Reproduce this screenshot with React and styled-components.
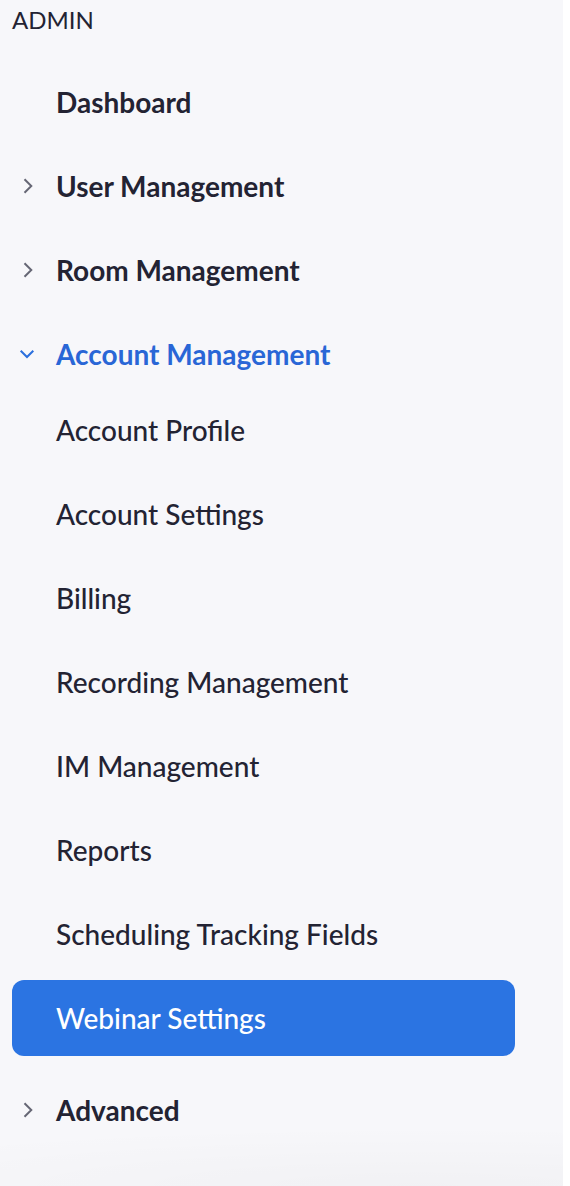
import React from "react";
import styled, { createGlobalStyle } from "styled-components";

const GlobalStyle = createGlobalStyle`
  html, body {
    margin: 0;
    padding: 0;
    background: #ffffff;
  }
  body {
    font-family: Lato, "Open Sans", "Liberation Sans", sans-serif;
    -webkit-font-smoothing: antialiased;
  }
`;

const menu = [
  { label: "Dashboard" },
  { label: "User Management", caret: "right" },
  { label: "Room Management", caret: "right" },
  {
    label: "Account Management",
    caret: "down",
    open: true,
    children: [
      "Account Profile",
      "Account Settings",
      "Billing",
      "Recording Management",
      "IM Management",
      "Reports",
      "Scheduling Tracking Fields",
      "Webinar Settings",
    ],
  },
  { label: "Advanced", caret: "right" },
];

const Caret = ({ dir }) =>
  dir === "down" ? (
    <svg width="16" height="10" viewBox="0 0 16 10">
      <path
        d="M1.7 1.7 L8 8 L14.3 1.7"
        fill="none"
        stroke="currentColor"
        strokeWidth="2"
      />
    </svg>
  ) : (
    <svg width="10" height="16" viewBox="0 0 10 16">
      <path
        d="M1.5 1.2 L8.3 8 L1.5 14.8"
        fill="none"
        stroke="currentColor"
        strokeWidth="2"
      />
    </svg>
  );

export default function App() {
  const active = "Webinar Settings";

  return (
    <>
      <GlobalStyle />
      <Sidebar>
        <Heading>ADMIN</Heading>
        <Nav>
          {menu.map((item) => (
            <React.Fragment key={item.label}>
              <TopItem $open={item.open}>
                <CaretSlot $open={item.open} $dir={item.caret}>
                  {item.caret && <Caret dir={item.caret} />}
                </CaretSlot>
                {item.label}
              </TopItem>
              {item.children && (
                <SubList>
                  {item.children.map((child) => (
                    <SubItem key={child} $active={child === active}>
                      {child}
                    </SubItem>
                  ))}
                </SubList>
              )}
            </React.Fragment>
          ))}
        </Nav>
      </Sidebar>
    </>
  );
}

const Sidebar = styled.aside`
  width: 563px;
  min-height: 100vh;
  box-sizing: border-box;
  background: radial-gradient(
      ellipse 120% 60px at 75% 100%,
      rgba(0, 0, 0, 0.025),
      rgba(0, 0, 0, 0) 100%
    ),
    #f7f7fa;
`;

const Heading = styled.div`
  height: 40px;
  line-height: 40px;
  padding-left: 12px;
  font-size: 24px;
  font-weight: 400;
  color: #232333;
`;

const Nav = styled.nav`
  display: flex;
  flex-direction: column;
  padding-top: 20px;
`;

const TopItem = styled.div`
  display: flex;
  align-items: center;
  height: 84px;
  margin-left: 12px;
  font-size: 28px;
  font-weight: 700;
  color: ${(p) => (p.$open ? "#2966d6" : "#232333")};
`;

const CaretSlot = styled.span`
  display: flex;
  align-items: center;
  width: 44px;
  padding-left: ${(p) => (p.$dir === "down" ? "7px" : "11px")};
  box-sizing: border-box;
  color: ${(p) => (p.$open ? "#2b6fdd" : "#666775")};
`;

const SubList = styled.div`
  display: flex;
  flex-direction: column;
  margin: -8px 0 8px;
`;

const SubItem = styled.div`
  display: flex;
  align-items: center;
  height: 76px;
  margin: 4px 48px 4px 12px;
  padding-left: 44px;
  border-radius: 12px;
  font-size: 28px;
  font-weight: 500;
  color: ${(p) => (p.$active ? "#ffffff" : "#232333")};
  background: ${(p) => (p.$active ? "#2b74e2" : "transparent")};
`;
